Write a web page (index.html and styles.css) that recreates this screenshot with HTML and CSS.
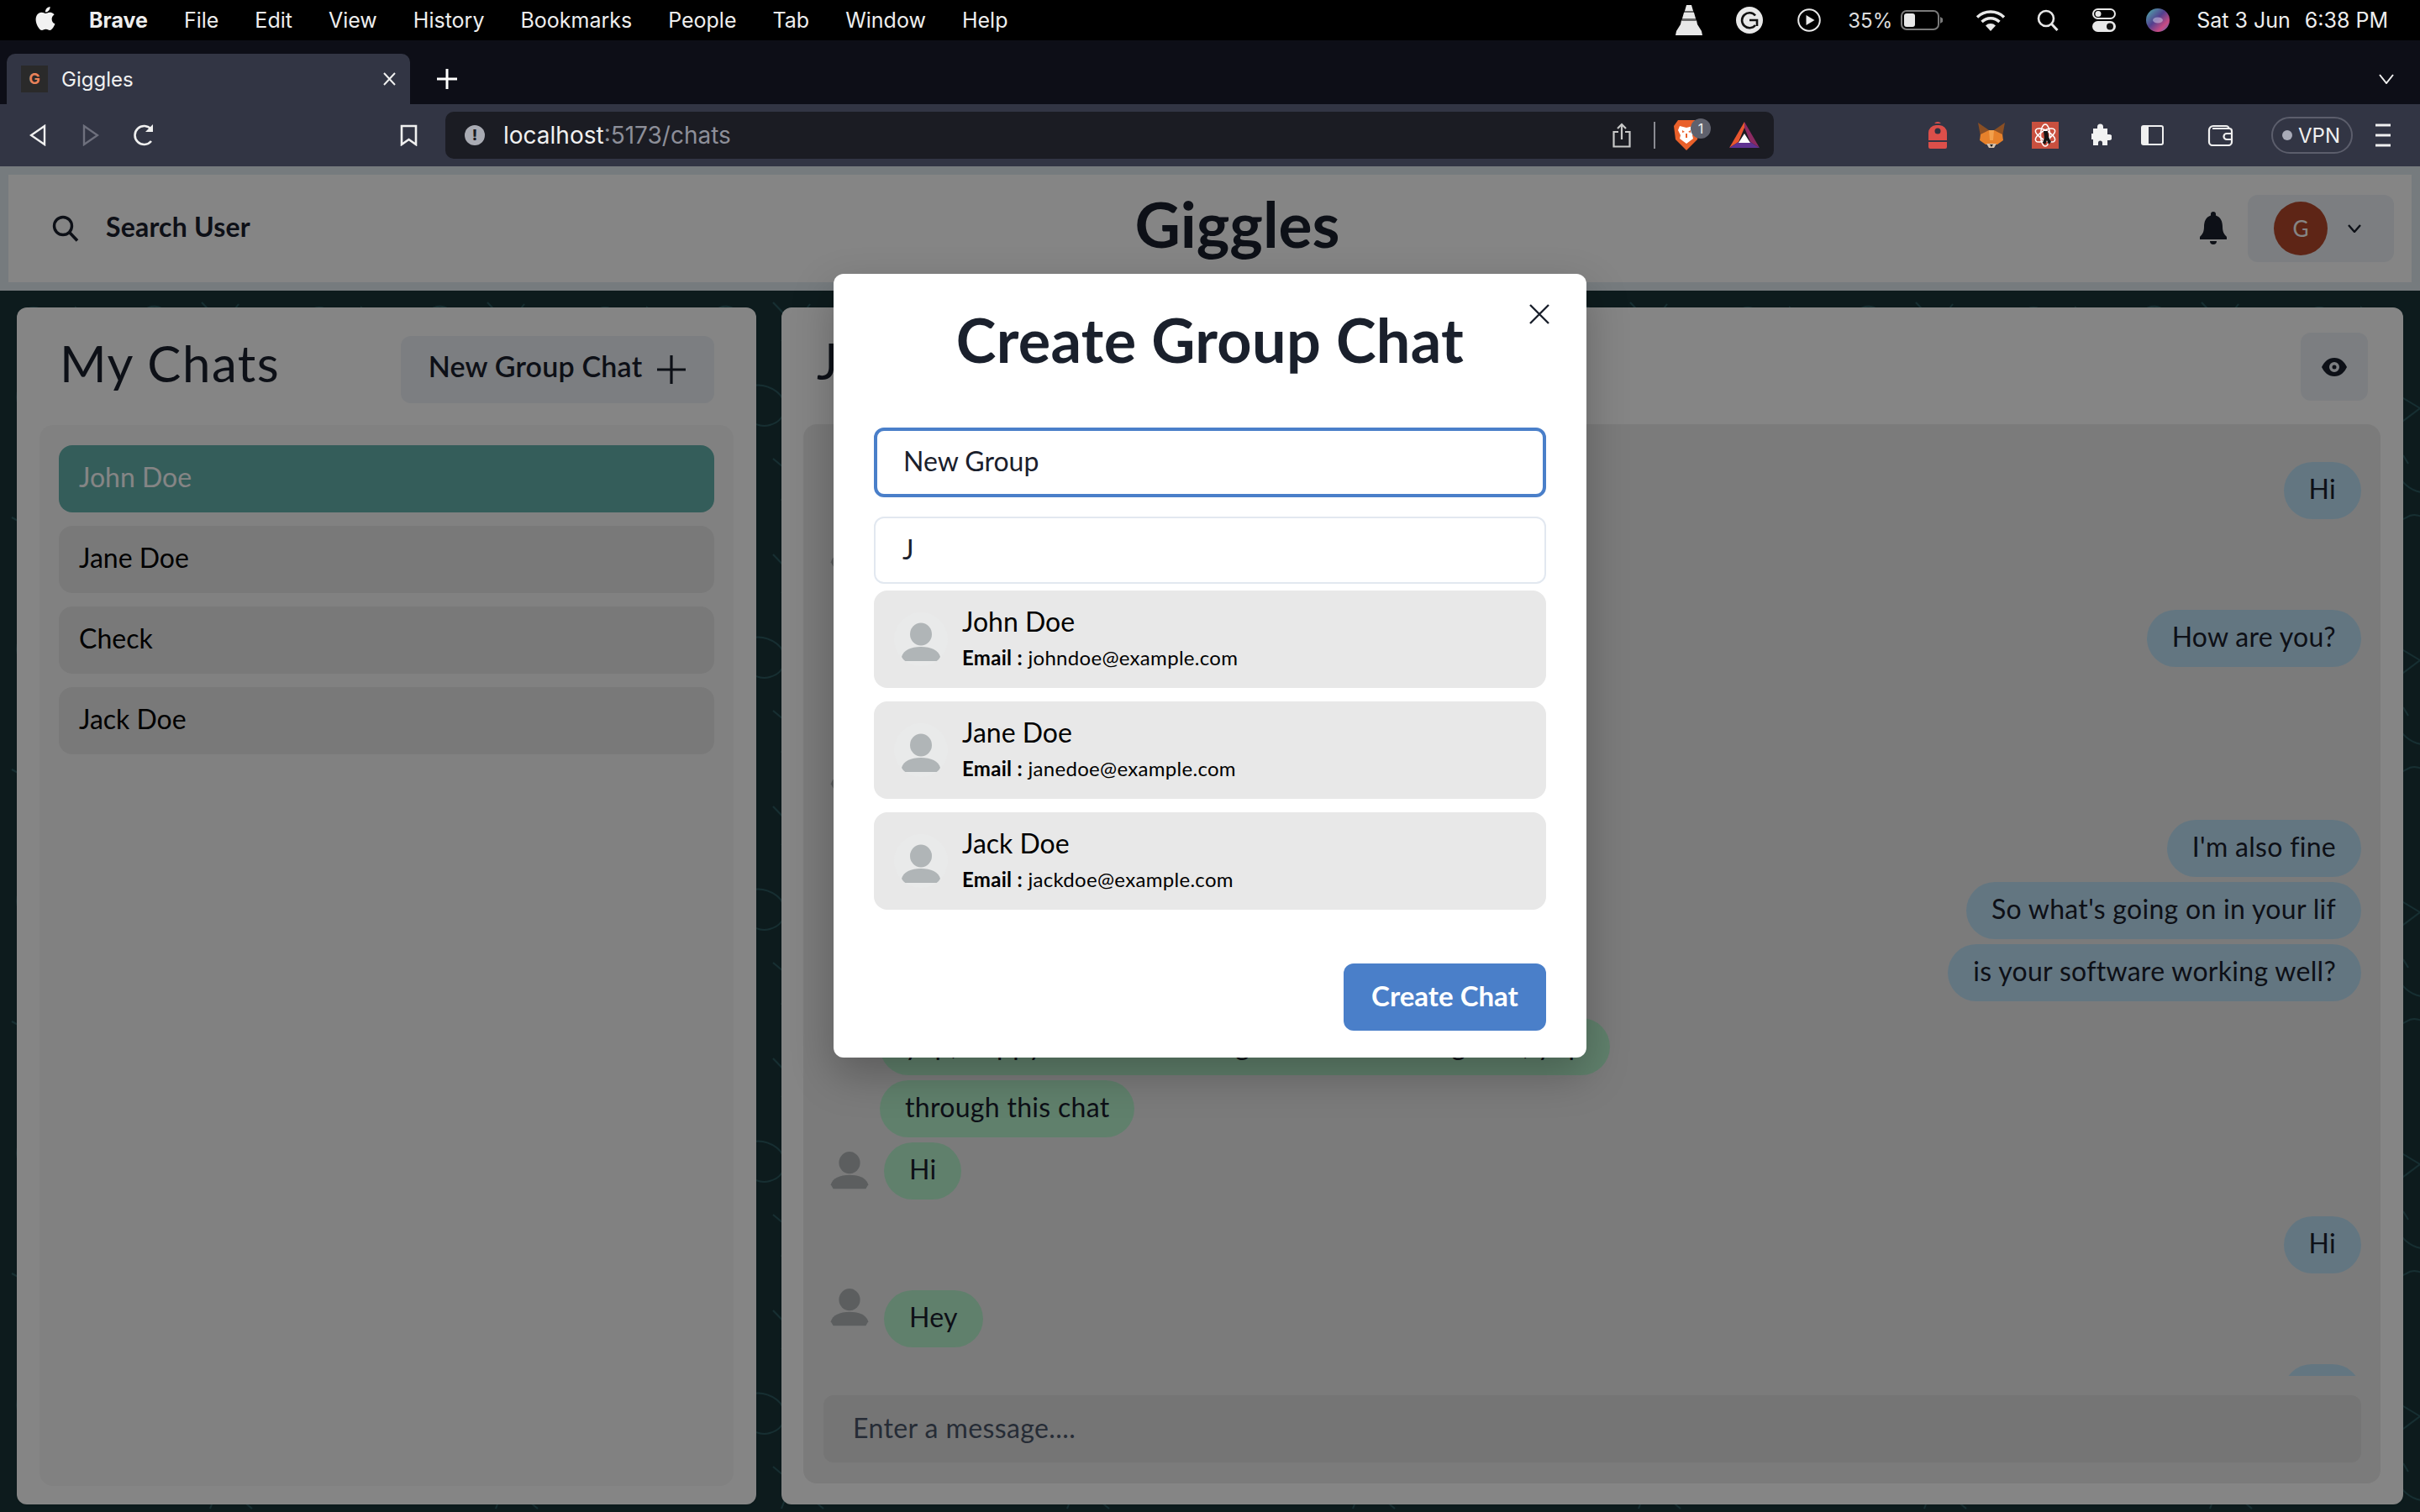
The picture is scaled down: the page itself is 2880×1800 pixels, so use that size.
FILE: index.html
```html
<!DOCTYPE html>
<html lang="en">
<head>
  <meta charset="UTF-8">
  <meta name="viewport" content="width=device-width, initial-scale=1.0">
  <title>Giggles</title>
  <link rel="stylesheet" href="styles.css">
</head>
<body>
  <div class="menubar">
    <svg class="apple" viewBox="0 0 24 24"><path fill="#f2f2f2" d="M12.152 6.896c-.948 0-2.415-1.078-3.96-1.04-2.04.027-3.91 1.183-4.961 3.014-2.117 3.675-.546 9.103 1.519 12.09 1.013 1.454 2.208 3.09 3.792 3.039 1.52-.065 2.09-.987 3.935-.987 1.831 0 2.35.987 3.96.948 1.637-.026 2.676-1.48 3.676-2.948 1.156-1.688 1.636-3.325 1.662-3.415-.039-.013-3.182-1.221-3.22-4.857-.026-3.04 2.48-4.494 2.597-4.559-1.429-2.09-3.623-2.324-4.39-2.376-2-.156-3.675 1.09-4.61 1.09zM15.53 3.83c.843-1.012 1.4-2.427 1.245-3.83-1.207.052-2.662.805-3.532 1.818-.78.896-1.454 2.338-1.273 3.714 1.338.104 2.715-.688 3.559-1.701"/></svg>
    <nav class="menu-items">
      <span class="menu-app">Brave</span>
      <span>File</span>
      <span>Edit</span>
      <span>View</span>
      <span>History</span>
      <span>Bookmarks</span>
      <span>People</span>
      <span>Tab</span>
      <span>Window</span>
      <span>Help</span>
    </nav>
    <div class="status">
      <svg class="st-vlc" viewBox="0 0 32 36"><path fill="#e8e8e8" d="M13 0h6l2 7h-10zM10 9h12l2 7H8zM7 18h18l1 5 5 8 1 5H0l1-5 5-8z"/><path fill="#6a6a6a" d="M11 7h10l1 2H10zM8 16h16l1 3H7z"/></svg>
      <svg class="st-gram" viewBox="0 0 32 32"><circle cx="16" cy="16" r="16" fill="#e8e8e8"/><path fill="none" stroke="#111" stroke-width="2.6" d="M23 10.5a9 9 0 1 0 0 11.5M16 16h9v7"/></svg>
      <svg class="st-play" viewBox="0 0 28 28"><circle cx="14" cy="14" r="12.8" fill="none" stroke="#e8e8e8" stroke-width="2"/><path fill="#e8e8e8" d="M10.5 8l10 6-10 6z"/></svg>
      <span class="st-pct">35%</span>
      <svg class="st-batt" viewBox="0 0 50 24"><rect x="1" y="1" width="44" height="22" rx="6" fill="none" stroke="#7a7a7a" stroke-width="2"/><rect x="4" y="4" width="13" height="16" rx="3" fill="#e8e8e8"/><path fill="#7a7a7a" d="M47 8l3 2v4l-3 2z"/></svg>
      <svg class="st-wifi" viewBox="0 0 36 26"><path fill="none" stroke="#e8e8e8" stroke-width="3.4" d="M2 9.500a23 23 0 0 1 32 0M7.500 15a15 15 0 0 1 21 0"/><path fill="#e8e8e8" d="M18 26l-6-6.500a8.500 8.500 0 0 1 12 0z"/></svg>
      <svg class="st-find" viewBox="0 0 27 26"><circle cx="11" cy="11" r="9" fill="none" stroke="#e8e8e8" stroke-width="2.6"/><path stroke="#e8e8e8" stroke-width="3" d="M17.500 17.500l7 7.500"/></svg>
      <svg class="st-ctrl" viewBox="0 0 28 28"><rect x="1" y="1" width="26" height="11" rx="5.500" fill="none" stroke="#e8e8e8" stroke-width="2"/><circle cx="7" cy="6.500" r="3.500" fill="#e8e8e8"/><rect y="15" width="28" height="13" rx="6.500" fill="#e8e8e8"/><circle cx="21" cy="21.500" r="4" fill="#111"/></svg>
      <svg class="st-siri" viewBox="0 0 28 28">
        <defs><linearGradient id="siri" x1="0" y1="0" x2="1" y2="1"><stop offset="0" stop-color="#4fb8ae"/><stop offset=".45" stop-color="#52408f"/><stop offset=".75" stop-color="#c84a82"/><stop offset="1" stop-color="#3a78c9"/></linearGradient></defs>
        <circle cx="14" cy="14" r="14" fill="url(#siri)"/><ellipse cx="14" cy="14" rx="6" ry="3.500" fill="#dcd6ee" opacity=".5"/>
      </svg>
      <span class="st-date">Sat 3 Jun</span>
      <span class="st-time">6:38 PM</span>
    </div>
  </div>

  <div class="tabstrip">
    <div class="tab">
      <div class="favicon">G</div>
      <span class="tab-title">Giggles</span>
      <svg class="tab-close" viewBox="0 0 20 16"><path stroke="#f0f0f0" stroke-width="2" d="M3 1l13 14M16 1L3 15"/></svg>
    </div>
    <svg class="tab-new" viewBox="0 0 24 24"><path stroke="#fff" stroke-width="3" d="M12 0v24M0 12h24"/></svg>
    <svg class="tab-list" viewBox="0 0 18 12"><path fill="none" stroke="#f0f0f0" stroke-width="2" d="M1 1l8 10 8-10"/></svg>
  </div>

  <div class="toolbar">
    <svg class="tb-back" viewBox="0 0 20 26"><path fill="none" stroke="#f0f0f0" stroke-width="2.4" d="M18 2v22L2 13z"/></svg>
    <svg class="tb-forward" viewBox="0 0 20 26"><path fill="none" stroke="#6e707d" stroke-width="2.4" d="M2 2v22l16-11z"/></svg>
    <svg class="tb-reload" viewBox="0 0 28 28"><path fill="none" stroke="#f0f0f0" stroke-width="2.6" d="M22 21a11 11 0 1 1 0-14"/><path fill="#f0f0f0" d="M24 1v9h-9z"/></svg>
    <svg class="tb-mark" viewBox="0 0 21 26"><path fill="none" stroke="#f0f0f0" stroke-width="2.6" d="M2 2h17v22l-8.500-6L2 24z"/></svg>
    <div class="urlbar">
      <div class="url-info">!</div>
      <span class="url-host">localhost</span><span class="url-path">:5173/chats</span>
      <svg class="url-share" viewBox="0 0 22 30"><path fill="none" stroke="#c8c8c8" stroke-width="2.2" d="M7 11H1.500v17.500h19V11H15M11 20V2M6 7l5-5 5 5"/></svg>
      <div class="url-divider"></div>
      <div class="url-brave">
        <svg viewBox="0 0 30 36"><path fill="#e9602a" d="M5 0h20l5 7-2 16-13 13L2 23 0 7z"/><path fill="#fff" d="M7 7l8 2 8-2 2 5-3 6 1 4-8 6-8-6 1-4-3-6z"/><path fill="#e9602a" d="M10 12l3 2-3 1zM20 12l-3 2 3 1zM14 16h2v5h-2z"/></svg>
        <span class="url-badge">1</span>
      </div>
      <svg class="url-bat" viewBox="0 0 36 32"><path fill="#e9562f" d="M18 0L0 31l11-7 7-17z"/><path fill="#8c2a62" d="M18 0l18 31-11-7-7-17z"/><path fill="#5f3291" d="M0 31h36l-11-7H11z"/><path fill="#fff" d="M18 14l7 11H11z"/></svg>
    </div>
    <svg class="ext-pack" viewBox="0 0 22 32"><path fill="#dc4f4a" d="M7 2a5 5 0 0 1 8 0zM0 13a9 9 0 0 1 9-9h4a9 9 0 0 1 9 9v9H0zM0 24h22v6a2 2 0 0 1-2 2H2a2 2 0 0 1-2-2z"/><circle cx="11" cy="11" r="3.500" fill="#2f3140"/></svg>
    <svg class="ext-fox" viewBox="0 0 32 30"><path fill="#8a4f24" d="M0 0l13 9h6L32 0l-3 16H3z"/><path fill="#e6812b" d="M3 14l10-5h6l10 5 1 7-7 5H9l-7-5z"/><path fill="#f2a04c" d="M13 9h6l-1 12h-4z"/><path fill="#d6c2ae" d="M10 25h12l-3 5h-6z"/><path fill="#1c1c1c" d="M14 26h4l-2 3z"/></svg>
    <div class="ext-atom">
      <svg viewBox="0 0 32 32"><g fill="none" stroke="#fff" stroke-width="1.500"><ellipse cx="16" cy="16" rx="13" ry="5.500" transform="rotate(30 16 16)"/><ellipse cx="16" cy="16" rx="13" ry="5.500" transform="rotate(-30 16 16)"/><ellipse cx="16" cy="16" rx="5.500" ry="13"/></g><path fill="#151515" d="M14 11h5l1 7 3 6-3 3-2-5-2 5-3-2 2-6z"/></svg>
    </div>
    <svg class="ext-puzzle" viewBox="0 0 28 28"><path fill="#f2f2f2" d="M6 6h5V4a3.500 3.500 0 0 1 7 0v2h5v7h2a3.500 3.500 0 0 1 0 7h-2v6h-6v-3a2.500 2.500 0 0 0-5 0v3H6v-7H4v-7h2z"/></svg>
    <svg class="tb-side" viewBox="0 0 27 24"><rect x="1" y="1" width="25" height="22" rx="2" fill="none" stroke="#f0f0f0" stroke-width="2"/><rect x="1" y="1" width="8" height="22" fill="#f0f0f0"/></svg>
    <svg class="tb-wallet" viewBox="0 0 31 26"><path fill="none" stroke="#f0f0f0" stroke-width="2.200" d="M2 7a5 5 0 0 1 5-5h15a4 4 0 0 1 4 4M2 7v14a4 4 0 0 0 4 4h19a4 4 0 0 0 4-4V8a3 3 0 0 0-3-3H6M29 11h-6a3.500 3.500 0 0 0 0 7h6"/></svg>
    <div class="vpn"><span class="vpn-dot"></span>VPN</div>
    <svg class="tb-menu" viewBox="0 0 18 28"><path stroke="#f0f0f0" stroke-width="3" d="M0 2h18M0 14h18M0 26h18"/></svg>
  </div>

  <div class="page">
    <header class="navbar">
      <div class="search-user">
        <svg viewBox="0 0 32 32"><circle cx="13" cy="13" r="10.500" fill="none" stroke="#1a202c" stroke-width="3.400"/><path stroke="#1a202c" stroke-width="3.600" d="M21 21l9 9.500"/></svg>
        <span>Search User</span>
      </div>
      <div class="brand">Giggles</div>
      <div class="nav-right">
        <svg class="bell" viewBox="0 0 32 40"><path fill="#1a202c" d="M16 0a3 3 0 0 1 3 3v1.500C25 6.500 27 12 27 18c0 6 2 9 5 12v3H0v-3c3-3 5-6 5-12 0-6 2-11.500 8-13.500V3a3 3 0 0 1 3-3zM12 35h8a4 4 0 0 1-8 0z"/></svg>
        <div class="user-btn">
          <div class="user-avatar">G</div>
          <svg class="user-chevron" viewBox="0 0 16 10"><path fill="none" stroke="#1a202c" stroke-width="2.400" d="M1 1l7 8 7-8"/></svg>
        </div>
      </div>
    </header>

    <main class="workspace">
      <svg class="doodles" width="100%" height="100%">
        <defs>
          <pattern id="doodle" width="340" height="300" patternUnits="userSpaceOnUse">
            <g fill="none" stroke="#2c5a60" stroke-width="2">
              <circle cx="40" cy="36" r="16"/>
              <path d="M90 20l14 10 16-6-5 17 11 14-18 0-10 15-6-17-17-5 14-10z"/>
              <path d="M170 24c20-16 40 8 24 22s-38 10-30-8"/>
              <path d="M240 14l40 42M250 60l34-44"/>
              <circle cx="312" cy="60" r="9"/>
              <path d="M24 110c24-20 44 10 30 30s-44 4-30-30z"/>
              <path d="M110 110l50 30-40 30z"/>
              <path d="M200 120c14-10 30-10 44 0s14 34-8 40-44-20-36-40z"/>
              <path d="M284 120l36 14-18 34z"/>
              <circle cx="66" cy="220" r="20"/><circle cx="66" cy="220" r="8"/>
              <path d="M130 210c10 30 40 40 60 20M140 196l6 10M180 196l-6 10"/>
              <path d="M240 200l60 50M250 250c10-30 30-50 56-54"/>
              <path d="M14 270l30 16M100 270c14-10 30 10 44 0s30 10 44 0"/>
            </g>
          </pattern>
        </defs>
        <rect width="100%" height="100%" fill="url(#doodle)"/>
      </svg>

      <section class="panel chats-panel">
        <div class="panel-head">
          <h2 class="panel-title">My Chats</h2>
          <button class="btn-gray group-btn"><span>New Group Chat</span>
            <svg viewBox="0 0 36 36"><path stroke="#1a202c" stroke-width="3.200" d="M18 1v34M1 18h34"/></svg>
          </button>
        </div>
        <div class="chat-list">
          <div class="chat-item active">John Doe</div>
          <div class="chat-item">Jane Doe</div>
          <div class="chat-item">Check</div>
          <div class="chat-item">Jack Doe</div>
        </div>
      </section>

      <section class="panel chat-panel">
        <div class="chat-head">
          <h2 class="panel-title">John Doe</h2>
          <button class="btn-gray eye-btn">
            <svg viewBox="0 0 30 22"><path fill="#1a202c" fill-rule="evenodd" d="M15 0c7 0 12 4.500 15 11-3 6.500-8 11-15 11S3 17.500 0 11C3 4.500 8 0 15 0zm0 5a6 6 0 1 0 0 12 6 6 0 0 0 0-12zm0 3.500a2.500 2.500 0 1 1 0 5 2.500 2.500 0 0 1 0-5z"/></svg>
          </button>
        </div>
        <div class="chat-box">
          <div class="messages">
            <div class="msg mine"><span class="bubble">Hi</span></div>
            <div class="msg gap-14">
              <svg class="msg-avatar raised" viewBox="0 0 64 64"><use href="#person"/></svg>
              <span class="bubble bubble-hidden"></span>
            </div>
            <div class="msg mine gap-26"><span class="bubble">How are you?</span></div>
            <div class="msg follow gap-28"><span class="bubble bubble-hidden"></span></div>
            <div class="msg gap-6">
              <svg class="msg-avatar raised" viewBox="0 0 64 64"><use href="#person"/></svg>
              <span class="bubble bubble-hidden"></span>
            </div>
            <div class="msg mine gap-12"><span class="bubble">I'm also fine</span></div>
            <div class="msg mine gap-6"><span class="bubble">So what's going on in your lif</span></div>
            <div class="msg mine gap-6"><span class="bubble">is your software working well?</span></div>
            <div class="msg follow gap-20"><span class="bubble bubble-long">yep, happy to hear that it goes well and to go on, yup</span></div>
            <div class="msg follow gap-6"><span class="bubble">through this chat</span></div>
            <div class="msg gap-6">
              <svg class="msg-avatar" viewBox="0 0 64 64"><use href="#person"/></svg>
              <span class="bubble">Hi</span>
            </div>
            <div class="msg mine gap-20"><span class="bubble">Hi</span></div>
            <div class="msg gap-20">
              <svg class="msg-avatar raised" viewBox="0 0 64 64"><use href="#person"/></svg>
              <span class="bubble">Hey</span>
            </div>
            <div class="msg mine gap-20"><span class="bubble bubble-hidden"></span></div>
          </div>
          <input class="msg-input" type="text" placeholder="Enter a message....">
        </div>
      </section>
    </main>

    <div class="overlay"></div>

    <div class="modal">
      <svg class="modal-close" viewBox="0 0 24 24"><path stroke="#1a202c" stroke-width="2.400" d="M1 1l22 22M23 1L1 23"/></svg>
      <h1 class="modal-title">Create Group Chat</h1>
      <input class="field focused" type="text" value="New Group">
      <input class="field" type="text" value="J">
      <div class="results">
        <div class="result">
          <svg class="result-avatar" viewBox="0 0 64 64">
            <g id="person"><ellipse cx="32" cy="26" rx="13" ry="13.500"/><path d="M9 53c2-8 11-12 23-12s21 4 23 12l-3 5H12z"/></g>
          </svg>
          <div class="result-info">
            <div class="result-name">John Doe</div>
            <div class="result-email"><b>Email :</b> johndoe@example.com</div>
          </div>
        </div>
        <div class="result">
          <svg class="result-avatar" viewBox="0 0 64 64"><use href="#person"/></svg>
          <div class="result-info">
            <div class="result-name">Jane Doe</div>
            <div class="result-email"><b>Email :</b> janedoe@example.com</div>
          </div>
        </div>
        <div class="result">
          <svg class="result-avatar" viewBox="0 0 64 64"><use href="#person"/></svg>
          <div class="result-info">
            <div class="result-name">Jack Doe</div>
            <div class="result-email"><b>Email :</b> jackdoe@example.com</div>
          </div>
        </div>
      </div>
      <button class="create-btn">Create Chat</button>
    </div>
  </div>
</body>
</html>
```

FILE: styles.css
```css
* {
  box-sizing: border-box;
}

body {
  margin: 0;
  width: 2880px;
  height: 1800px;
  overflow: hidden;
  display: flex;
  flex-direction: column;
  font-family: Lato, "Open Sans", sans-serif;
  color: #1a202c;
}

svg {
  display: block;
  flex-shrink: 0;
}

/* mac menu bar */
.menubar {
  height: 48px;
  background-color: #000;
  color: #eee;
  display: flex;
  align-items: center;
  padding-left: 40px;
  font-family: Inter, sans-serif;
  font-size: 25px;
}

.apple {
  width: 28px;
  height: 34px;
  margin-top: -4px;
}

.menu-items {
  display: flex;
  gap: 43px;
  margin-left: 38px;
}

.menu-app {
  font-weight: 700;
}

.status {
  margin-left: auto;
  padding-right: 38px;
  display: flex;
  align-items: center;
}

.st-vlc { width: 32px; height: 36px; }
.st-gram { width: 32px; height: 32px; margin-left: 40px; }
.st-play { width: 28px; height: 28px; margin-left: 41px; }
.st-pct { margin-left: 32px; font-size: 24px; color: #ddd; }
.st-batt { width: 50px; height: 24px; margin-left: 10px; }
.st-wifi { width: 36px; height: 26px; margin-left: 39px; }
.st-find { width: 27px; height: 26px; margin-left: 37px; }
.st-ctrl { width: 28px; height: 28px; margin-left: 39px; }
.st-siri { width: 28px; height: 28px; margin-left: 36px; }
.st-date { margin-left: 32px; }
.st-time { margin-left: 17px; }

/* browser chrome */
.tabstrip {
  height: 76px;
  background-color: #0d0e17;
  display: flex;
  align-items: flex-end;
  padding-left: 8px;
  color: #f0f0f0;
  font-family: Inter, sans-serif;
}

.tab {
  width: 480px;
  height: 60px;
  background-color: #323544;
  border-radius: 10px 10px 0 0;
  display: flex;
  align-items: center;
  padding-left: 17px;
  font-size: 24px;
}

.favicon {
  width: 32px;
  height: 32px;
  background-color: #2a2a2a;
  color: #e8825a;
  font-size: 18px;
  font-weight: 700;
  text-align: center;
  line-height: 32px;
}

.tab-title {
  margin-left: 16px;
}

.tab-close {
  width: 20px;
  height: 16px;
  margin-left: auto;
  margin-right: 14px;
}

.tab-new {
  width: 24px;
  height: 24px;
  margin: 0 0 18px 32px;
}

.tab-list {
  width: 18px;
  height: 12px;
  margin: 0 31px 24px auto;
}

.toolbar {
  height: 74px;
  background-color: #323544;
  display: flex;
  align-items: center;
  padding-left: 35px;
  color: #f0f0f0;
  font-family: Inter, sans-serif;
}

.tb-back { width: 20px; height: 26px; }
.tb-forward { width: 20px; height: 26px; margin-left: 43px; }
.tb-reload { width: 28px; height: 28px; margin-left: 40px; }
.tb-mark { width: 21px; height: 26px; margin-left: 290px; }

.urlbar {
  width: 1581px;
  height: 56px;
  margin-left: 33px;
  background-color: #1b1c23;
  border-radius: 10px;
  display: flex;
  align-items: center;
  padding-left: 23px;
  font-size: 28px;
}

.url-info {
  width: 24px;
  height: 24px;
  border-radius: 50%;
  background-color: #a9abb3;
  color: #1b1c23;
  font-size: 18px;
  font-weight: 800;
  text-align: center;
  line-height: 24px;
  margin-right: 22px;
}

.url-path {
  color: #8d8f99;
}

.url-share { width: 22px; height: 30px; margin-left: auto; }

.url-divider {
  width: 2px;
  height: 32px;
  background-color: #8a8b92;
  margin-left: 27px;
}

.url-brave {
  position: relative;
  margin-left: 22px;
  width: 30px;
}

.url-brave svg {
  width: 30px;
  height: 36px;
}

.url-badge {
  position: absolute;
  top: -2px;
  left: 20px;
  width: 24px;
  height: 24px;
  border-radius: 12px;
  background-color: #5f616d;
  font-size: 16px;
  line-height: 24px;
  text-align: center;
}

.url-bat {
  width: 36px;
  height: 32px;
  margin: 0 17px 0 36px;
}

.ext-pack { width: 22px; height: 32px; margin-left: 184px; }
.ext-fox { width: 32px; height: 30px; margin-left: 37px; }

.ext-atom {
  width: 32px;
  height: 32px;
  margin-left: 32px;
  background-color: #c9503f;
}

.ext-puzzle { width: 28px; height: 28px; margin-left: 35px; }
.tb-side { width: 27px; height: 24px; margin-left: 35px; }
.tb-wallet { width: 31px; height: 26px; margin-left: 52px; }

.vpn {
  width: 97px;
  height: 44px;
  margin-left: 45px;
  border: 2px solid #5c5e6c;
  border-radius: 22px;
  display: flex;
  align-items: center;
  padding-left: 11px;
  font-size: 24px;
}

.vpn-dot {
  width: 12px;
  height: 12px;
  border-radius: 50%;
  background-color: #a9abb8;
  margin-right: 7px;
}

.tb-menu { width: 18px; height: 28px; margin-left: 27px; }

/* app */
.page {
  position: relative;
  flex: 1;
  min-height: 0;
  display: flex;
  flex-direction: column;
}

.navbar {
  position: relative;
  height: 148px;
  background-color: #e3ebf2;
  padding: 10px;
  display: flex;
  align-items: stretch;
}

.navbar::before {
  content: "";
  position: absolute;
  top: 10px;
  bottom: 10px;
  left: 10px;
  right: 10px;
  background-color: #fff;
}

.search-user,
.brand,
.nav-right {
  position: relative;
  display: flex;
  align-items: center;
}

.search-user {
  flex: 1;
  gap: 32px;
  padding-left: 52px;
  padding-bottom: 6px;
  font-size: 32px;
  font-weight: 700;
  letter-spacing: 0.2px;
}

.search-user svg {
  width: 32px;
  height: 32px;
  margin-top: 6px;
}

.brand {
  font-size: 75px;
  font-weight: 700;
  padding-bottom: 12px;
  margin-left: 34px;
}

.nav-right {
  flex: 1;
  justify-content: flex-end;
  padding-right: 21px;
}

.bell {
  width: 32px;
  height: 40px;
  margin-right: 25px;
}

.user-btn {
  width: 174px;
  height: 80px;
  background-color: #edf2f7;
  border-radius: 12px;
  display: flex;
  align-items: center;
  padding-left: 31px;
}

.user-avatar {
  width: 64px;
  height: 64px;
  border-radius: 50%;
  background-color: #b5482b;
  color: #fff;
  font-size: 26px;
  line-height: 64px;
  text-align: center;
}

.user-chevron {
  width: 16px;
  height: 10px;
  margin-left: 24px;
}

.workspace {
  position: relative;
  flex: 1;
  min-height: 0;
  background-color: #193539;
  display: flex;
  gap: 30px;
  padding: 20px 20px 9px;
}

.doodles {
  position: absolute;
  top: 0;
  left: 0;
}

.panel {
  position: relative;
  background-color: #fff;
  border-radius: 12px;
  box-shadow: 0 1px 3px rgba(0, 0, 0, 0.15);
  display: flex;
  flex-direction: column;
}

.chats-panel {
  width: 880px;
  padding: 34px 27px 22px;
}

.panel-head {
  display: flex;
  justify-content: space-between;
  align-items: center;
  height: 80px;
  padding: 0 23px 0 24px;
}

.panel-title {
  margin: 0 0 16px;
  font-size: 60px;
  font-weight: 400;
  letter-spacing: 1.5px;
}

.btn-gray {
  background-color: #edf2f7;
  border: none;
  border-radius: 12px;
  font-family: inherit;
  color: #1a202c;
  display: flex;
  align-items: center;
  justify-content: center;
}

.group-btn {
  width: 373px;
  height: 80px;
  gap: 17px;
  font-size: 34px;
  font-weight: 600;
}

.group-btn span {
  padding-bottom: 10px;
  letter-spacing: 0.2px;
}

.group-btn svg {
  width: 36px;
  height: 36px;
}

.chat-list {
  flex: 1;
  margin-top: 26px;
  background-color: #f8f8f8;
  border-radius: 16px;
  padding: 24px 23px;
  display: flex;
  flex-direction: column;
  gap: 16px;
}

.chat-item {
  height: 80px;
  background-color: #e8e8e8;
  color: #000;
  border-radius: 16px;
  padding-left: 24px;
  font-size: 32px;
  line-height: 76px;
}

.chat-item.active {
  background-color: #64b3ad;
  color: #fff;
}

.chat-panel {
  flex: 1;
  padding: 30px 27px 25px 26px;
}

.chat-head {
  display: flex;
  justify-content: space-between;
  align-items: center;
  height: 81px;
  padding: 0 15px 0 16px;
}

.eye-btn {
  width: 80px;
  height: 81px;
}

.eye-btn svg {
  width: 30px;
  height: 22px;
}

.chat-box {
  flex: 1;
  min-height: 0;
  margin-top: 28px;
  background-color: #ececec;
  border-radius: 16px;
  padding: 24px 23px 25px 24px;
  display: flex;
  flex-direction: column;
  gap: 23px;
}

.messages {
  flex: 1;
  min-height: 0;
  overflow: hidden;
  padding-top: 21px;
  display: flex;
  flex-direction: column;
}

.msg {
  display: flex;
  align-items: flex-start;
  flex-shrink: 0;
  gap: 10px;
}

.msg.mine {
  justify-content: flex-end;
}

.msg.follow {
  padding-left: 67px;
}

.gap-6 { margin-top: 6px; }
.gap-12 { margin-top: 12px; }
.gap-14 { margin-top: 14px; }
.gap-20 { margin-top: 20px; }
.gap-26 { margin-top: 26px; }
.gap-28 { margin-top: 28px; }

.msg-avatar {
  width: 62px;
  height: 62px;
  margin-top: -1px;
  fill: #b0b5b7;
}

.msg-avatar.raised {
  margin-top: -14px;
}

.bubble {
  height: 68px;
  padding: 0 30px;
  border-radius: 34px;
  background-color: #b9f5d0;
  font-size: 32px;
  line-height: 64px;
  letter-spacing: 0.3px;
  white-space: nowrap;
}

.mine .bubble {
  background-color: #bee3f8;
}

.bubble-hidden {
  width: 93px;
}

.bubble-long {
  letter-spacing: 1.27px;
}

.msg-input {
  height: 80px;
  flex-shrink: 0;
  background-color: #e0e0e0;
  border: none;
  border-radius: 12px;
  padding: 0 35px 4px;
  font-family: inherit;
  font-size: 32px;
  letter-spacing: 0.4px;
}

.msg-input::placeholder {
  color: #4a5568;
  opacity: 1;
}

/* modal */
.overlay {
  position: absolute;
  top: 0;
  left: 0;
  right: 0;
  bottom: 0;
  background-color: rgba(0, 0, 0, 0.48);
}

.modal {
  position: absolute;
  top: 128px;
  left: 992px;
  width: 896px;
  height: 933px;
  background-color: #fff;
  border-radius: 12px;
  box-shadow: 0 20px 50px rgba(0, 0, 0, 0.25);
  padding: 0 48px;
  display: flex;
  flex-direction: column;
}

.modal-close {
  position: absolute;
  top: 36px;
  right: 44px;
  width: 24px;
  height: 24px;
}

.modal-title {
  margin: 0;
  height: 183px;
  padding-top: 36px;
  font-size: 72px;
  line-height: 84px;
  font-weight: 700;
  letter-spacing: 0.3px;
  text-align: center;
}

.field {
  width: 100%;
  height: 80px;
  flex-shrink: 0;
  border: 2px solid #e2e8f0;
  border-radius: 12px;
  padding: 0 32px 4px;
  font-family: inherit;
  font-size: 32px;
  color: #1a202c;
}

.field.focused {
  height: 83px;
  margin-bottom: 23px;
  border: 4px solid #4a7fc9;
  padding: 0 31px 4px;
}

.results {
  margin-top: 8px;
  display: flex;
  flex-direction: column;
  gap: 16px;
}

.result {
  height: 116px;
  background-color: #e8e8e8;
  border-radius: 16px;
  display: flex;
  align-items: center;
  padding-left: 24px;
  color: #000;
}

.result-avatar {
  width: 64px;
  height: 64px;
  border-radius: 50%;
  background-color: #e9eaea;
  fill: #b0b5b7;
}

.result-info {
  margin-left: 17px;
  padding-bottom: 4px;
}

.result-name {
  font-size: 32px;
  line-height: 40px;
}

.result-email {
  font-size: 24px;
  line-height: 30px;
  margin-top: 8px;
  letter-spacing: 0.3px;
}

.create-btn {
  width: 241px;
  height: 80px;
  margin-top: 64px;
  padding-bottom: 6px;
  align-self: flex-end;
  background-color: #4a7fc9;
  border: none;
  border-radius: 12px;
  color: #fff;
  font-family: inherit;
  font-size: 33px;
  font-weight: 700;
}
```
